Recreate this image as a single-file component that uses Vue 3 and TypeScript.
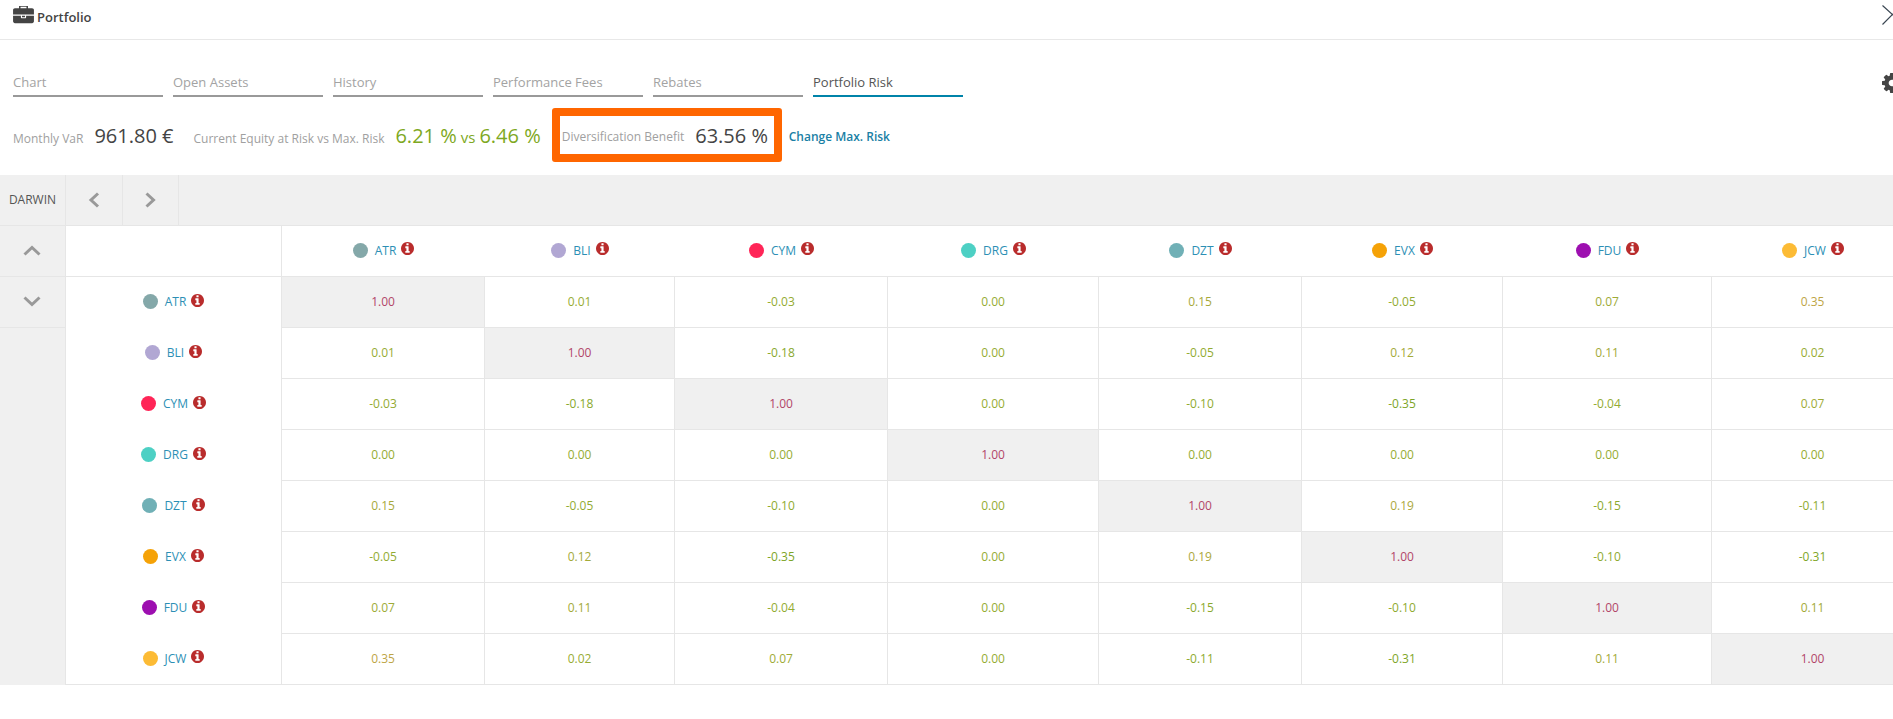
<script setup lang="ts">
interface Darwin {
  name: string
  color: string
}

const darwins: Darwin[] = [
  { name: 'ATR', color: '#84a8a9' },
  { name: 'BLI', color: '#b1a7d3' },
  { name: 'CYM', color: '#ff2557' },
  { name: 'DRG', color: '#4dd0c4' },
  { name: 'DZT', color: '#70b0b6' },
  { name: 'EVX', color: '#f5a207' },
  { name: 'FDU', color: '#9d0fb0' },
  { name: 'JCW', color: '#fcbb35' },
]

const matrix: number[][] = [
  [1, 0.01, -0.03, 0, 0.15, -0.05, 0.07, 0.35],
  [0.01, 1, -0.18, 0, -0.05, 0.12, 0.11, 0.02],
  [-0.03, -0.18, 1, 0, -0.1, -0.35, -0.04, 0.07],
  [0, 0, 0, 1, 0, 0, 0, 0],
  [0.15, -0.05, -0.1, 0, 1, 0.19, -0.15, -0.11],
  [-0.05, 0.12, -0.35, 0, 0.19, 1, -0.1, -0.31],
  [0.07, 0.11, -0.04, 0, -0.15, -0.1, 1, 0.11],
  [0.35, 0.02, 0.07, 0, -0.11, -0.31, 0.11, 1],
]

const tabs = ['Chart', 'Open Assets', 'History', 'Performance Fees', 'Rebates', 'Portfolio Risk']

const INFO_PATH =
  'M1152 1376v-160q0-14-9-23t-23-9h-96v-512q0-14-9-23t-23-9h-320q-14 0-23 9t-9 23v160q0 14 9 23t23 9h96v320h-96q-14 0-23 9t-9 23v160q0 14 9 23t23 9h448q14 0 23-9t9-23zm-128-896v-160q0-14-9-23t-23-9h-192q-14 0-23 9t-9 23v160q0 14 9 23t23 9h192q14 0 23-9t9-23zm640 416q0 209-103 385.500t-279.500 279.500-385.500 103-385.500-103-279.500-279.500-103-385.500 103-385.500 279.500-279.500 385.500-103 385.500 103 279.500 279.500 103 385.500z'

// value -> colour, goes green to gold and then crimson at 1.00
const stops: [number, number[]][] = [
  [-0.35, [125, 165, 40]],
  [0, [150, 172, 50]],
  [0.35, [190, 165, 70]],
  [1, [178, 70, 105]],
]

function cellColor(v: number): string {
  for (let i = 1; i < stops.length; i++) {
    const [hi, c2] = stops[i]
    if (v <= hi) {
      const [lo, c1] = stops[i - 1]
      const t = (v - lo) / (hi - lo)
      const rgb = c1.map((c, k) => Math.round(c + (c2[k] - c) * t))
      return `rgb(${rgb.join(',')})`
    }
  }
  return 'rgb(178,70,105)'
}
</script>

<template>
  <div class="page">
    <header class="topbar">
      <div class="title">
        <svg class="briefcase" viewBox="0 0 1792 1632" aria-hidden="true">
          <path
            transform="translate(0 -64)"
            d="M640 256h512v-128h-512v128zm1152 640v480q0 66-47 113t-113 47h-1472q-66 0-113-47t-47-113v-480h672v160q0 26 19 45t45 19h320q26 0 45-19t19-45v-160h672zm-768 0v128h-256v-128h256zm768-480v384h-1792v-384q0-66 47-113t113-47h352v-160q0-40 28-68t68-28h576q40 0 68 28t28 68v160h352q66 0 113 47t47 113z"
          />
        </svg>
        <span>Portfolio</span>
      </div>
      <svg class="close" viewBox="0 0 20 20" aria-label="Close">
        <path d="M0.5 0.5 10.5 9.5 0.5 19.5" />
        <path d="M20.5 0.5 10.5 9.5 20.5 19.5" />
      </svg>
    </header>

    <div class="tabs-row">
      <nav class="tabs">
        <a
          v-for="(tab, i) in tabs"
          :key="tab"
          class="tab"
          :class="{ 'tab--active': i === tabs.length - 1 }"
        >{{ tab }}</a>
      </nav>
      <svg class="gear" viewBox="128 128 1536 1536" aria-label="Settings">
        <path
          d="M1152 896q0-106-75-181t-181-75-181 75-75 181 75 181 181 75 181-75 75-181zm512-109v222q0 12-8 23t-20 13l-185 28q-19 54-39 91 35 50 107 138 10 12 10 25t-9 23q-27 37-99 108t-94 71q-12 0-26-9l-138-108q-44 23-91 38-16 136-29 186-7 28-36 28h-222q-14 0-24.500-8.500t-11.500-21.500l-28-184q-49-16-90-37l-141 107q-10 9-25 9-14 0-25-11-126-114-165-168-7-10-7-23 0-12 8-23 15-21 51-66.500t54-70.500q-27-50-41-99l-183-27q-13-2-21-12.500t-8-23.500v-222q0-12 8-23t19-13l186-28q14-46 39-92-40-57-107-138-10-12-10-24 0-10 9-23 26-36 98.500-107.500t94.500-71.500q13 0 26 10l138 107q44-23 91-38 16-136 29-186 7-28 36-28h222q14 0 24.500 8.500t11.500 21.500l28 184q49 16 90 37l142-107q9-9 24-9 13 0 25 10 129 119 165 170 7 8 7 22 0 12-8 23-15 21-51 66.500t-54 70.500q26 50 41 98l183 28q13 2 21 12.500t8 23.500z"
        />
      </svg>
    </div>

    <div class="stats">
      <div class="stat stat--var">
        <span class="stat-label">Monthly VaR</span>
        <span class="stat-value">961.80 €</span>
      </div>
      <div class="stat stat--equity">
        <span class="stat-label">Current Equity at Risk vs Max. Risk</span>
        <span class="stat-value stat-value--green">6.21 %</span>
        <span class="stat-vs">vs</span>
        <span class="stat-value stat-value--green">6.46 %</span>
      </div>
      <div class="stat stat--benefit">
        <span class="stat-label">Diversification Benefit</span>
        <span class="stat-value">63.56 %</span>
      </div>
      <a class="change-link">Change Max. Risk</a>
    </div>

    <div class="toolbar">
      <div class="toolbar-label">DARWIN</div>
      <button class="nav-btn nav-btn--first" aria-label="Previous">
        <svg viewBox="0 0 12 16" width="12" height="16"><path d="M10 1.500 3 8l7 6.500" /></svg>
      </button>
      <button class="nav-btn" aria-label="Next">
        <svg viewBox="0 0 12 16" width="12" height="16"><path d="M1.500 1.500 8.500 8l-7 6.500" /></svg>
      </button>
    </div>

    <div class="body">
      <div class="rail">
        <button class="rail-btn" aria-label="Up">
          <svg viewBox="0 0 18 11" width="18" height="11"><path d="M1.500 9.500 9 2.500l7.500 7" /></svg>
        </button>
        <button class="rail-btn" aria-label="Down">
          <svg viewBox="0 0 18 11" width="18" height="11"><path d="M1.500 1.500 9 8.500l7.500-7" /></svg>
        </button>
      </div>

      <div class="matrix">
        <div class="corner" />
        <div v-for="d in darwins" :key="'col-' + d.name" class="head">
          <span class="dot" :style="{ background: d.color }" />
          <span class="name">{{ d.name }}</span>
          <svg class="info" viewBox="128 128 1536 1536" aria-hidden="true"><path :d="INFO_PATH" /></svg>
        </div>

        <template v-for="(row, r) in matrix" :key="darwins[r].name">
          <div class="row-head">
            <span class="dot" :style="{ background: darwins[r].color }" />
            <span class="name">{{ darwins[r].name }}</span>
            <svg class="info" viewBox="128 128 1536 1536" aria-hidden="true"><path :d="INFO_PATH" /></svg>
          </div>
          <div
            v-for="(v, c) in row"
            :key="c"
            class="cell"
            :class="{ 'cell--self': r === c }"
            :style="{ color: cellColor(v) }"
          >{{ v.toFixed(2) }}</div>
        </template>
      </div>
    </div>
  </div>
</template>

<style scoped>
.page {
  width: 1914px;
  height: 719px;
  overflow: hidden;
  background: #fff;
  font-family: "Open Sans", "Liberation Sans", sans-serif;
  color: #444;
}

/* top bar */
.topbar {
  height: 39px;
  border-bottom: 1px solid #e8e8e8;
  display: flex;
  align-items: flex-start;
  justify-content: space-between;
  padding: 0 12px 0 13px;
}

.title {
  display: flex;
  align-items: center;
  gap: 3px;
  height: 34px;
  font-size: 13px;
  font-weight: 600;
  color: #444;
}

.briefcase {
  width: 21px;
  height: 19px;
  fill: #444;
  margin-top: -3px;
}

.close {
  width: 20px;
  height: 20px;
  margin-top: 5px;
  fill: none;
  stroke: #3a4652;
  stroke-width: 1.2;
}

/* tabs */
.tabs-row {
  display: flex;
  justify-content: space-between;
  align-items: flex-start;
  padding: 32px 12px 0 13px;
  height: 58px;
  box-sizing: border-box;
}

.tabs {
  display: flex;
  gap: 10px;
}

.tab {
  width: 150px;
  height: 25px;
  box-sizing: border-box;
  border-bottom: 2px solid #999;
  font-size: 13px;
  line-height: 17px;
  color: #a3a3a3;
  padding-top: 2px;
}

.tab--active {
  color: #555;
  border-bottom-color: #0083a9;
}

.gear {
  width: 20px;
  height: 20px;
  fill: #444;
  margin-top: 1px;
}

/* stats */
.stats {
  display: flex;
  align-items: center;
  padding: 10px 0 13px 13px;
  height: 77px;
  box-sizing: border-box;
}

.stat {
  display: flex;
  align-items: baseline;
  white-space: nowrap;
}

.stat--var,
.stat--equity,
.change-link {
  margin-top: 2px;
}

.stat-label {
  font-size: 12px;
  color: #a0a0a0;
}

.stat-value {
  font-size: 20px;
  line-height: 24px;
  color: #444;
  margin-left: 11px;
}

.stat-value--green {
  color: #7ea822;
}

.stat-vs {
  font-size: 15px;
  color: #7ea822;
  margin: 0 4px;
}

.stat-vs + .stat-value {
  margin-left: 0;
}

.stat--equity {
  margin-left: 20px;
}

.stat--benefit {
  box-sizing: border-box;
  width: 230px;
  height: 54px;
  margin-left: 11px;
  border: 8px solid #ff6600;
  border-radius: 3px;
  padding: 2px 0 0 2px;
  align-items: center;
}

.stat--benefit .stat-value {
  margin-left: 11px;
}

.change-link {
  margin-left: 7px;
  font-size: 12px;
  font-weight: 600;
  color: #1a7fa5;
  white-space: nowrap;
}

/* toolbar band */
.toolbar {
  display: flex;
  height: 50px;
  background: #f0f0f0;
}

.toolbar-label {
  box-sizing: border-box;
  width: 66px;
  border-right: 1px solid #e6e6e6;
  font-size: 12px;
  line-height: 50px;
  text-align: center;
  color: #555;
}

.nav-btn {
  box-sizing: border-box;
  width: 56px;
  border: 0;
  border-right: 1px solid #e6e6e6;
  background: none;
  padding: 0;
  display: flex;
  align-items: center;
  justify-content: center;
}

.nav-btn--first {
  width: 57px;
}

.nav-btn svg,
.rail-btn svg {
  fill: none;
  stroke: #999;
  stroke-width: 3;
}

/* matrix */
.body {
  display: flex;
  align-items: stretch;
}

.rail {
  box-sizing: border-box;
  width: 66px;
  background: #f0f0f0;
  border-right: 1px solid #e6e6e6;
  flex-shrink: 0;
}

.rail-btn {
  box-sizing: border-box;
  display: flex;
  align-items: center;
  justify-content: center;
  width: 100%;
  height: 51px;
  border: 0;
  border-top: 1px solid #e6e6e6;
  background: none;
  padding: 0 2px 1px 0;
}

.rail-btn:last-child {
  border-bottom: 1px solid #e6e6e6;
  height: 52px;
}

.matrix {
  display: grid;
  grid-template-columns: 216px 203px 190px 213px 211px 203px 201px 209px 202px;
  grid-auto-rows: 51px;
  border-top: 1px solid #e6e6e6;
}

.corner,
.head,
.row-head,
.cell {
  box-sizing: border-box;
  display: flex;
  align-items: center;
  justify-content: center;
  padding-bottom: 2px;
}

.corner,
.row-head {
  border-right: 1px solid #e6e6e6;
}

.corner,
.head {
  border-bottom: 1px solid #e6e6e6;
}

.row-head:nth-last-child(9) {
  border-bottom: 1px solid #e6e6e6;
}

.cell {
  border-right: 1px solid #e6e6e6;
  border-bottom: 1px solid #e6e6e6;
  font-size: 12px;
}

.cell--self {
  background: #f0f0f0;
}

.dot {
  width: 15px;
  height: 15px;
  border-radius: 50%;
  margin-right: 7px;
  flex-shrink: 0;
}

.name {
  font-size: 12px;
  color: #2c8fb5;
}

.info {
  width: 13px;
  height: 13px;
  margin: -3px 0 0 5px;
  fill: #b92c2c;
}
</style>

<style>
html,
body {
  margin: 0;
  overflow: hidden;
  background: #fff;
}
</style>
